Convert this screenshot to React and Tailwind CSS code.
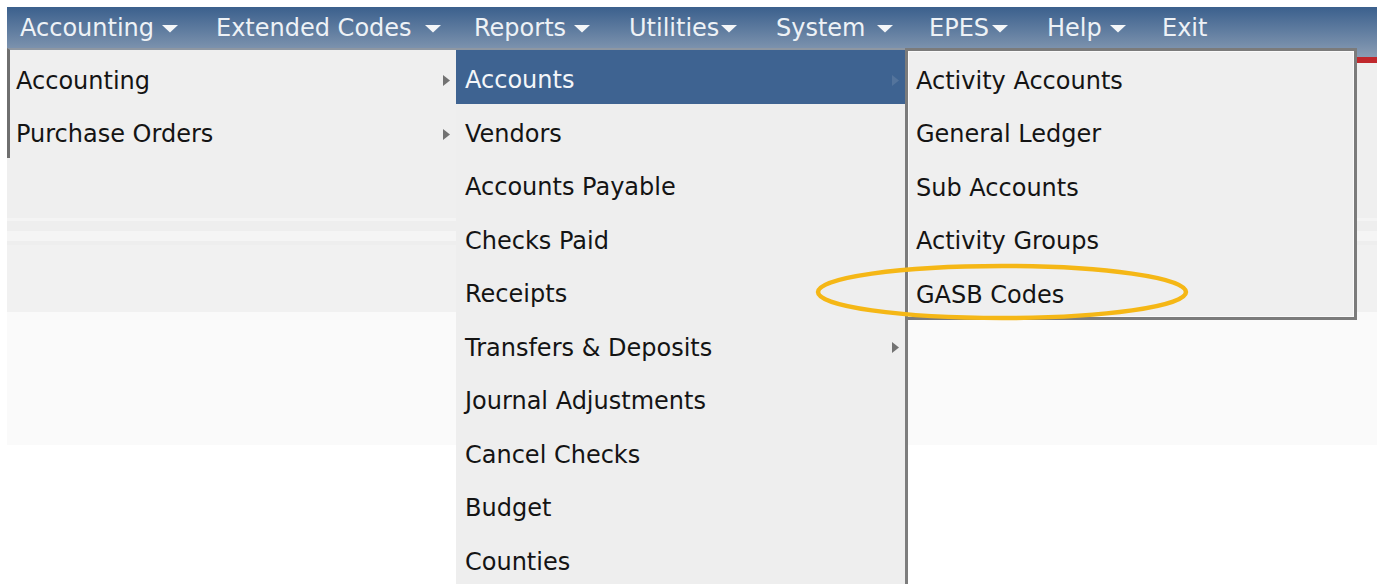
import React from 'react';

const topMenu = [
    { label: 'Accounting', width: 'w-[196px]', gap: 'ml-[8px]', arrow: true },
    { label: 'Extended Codes', width: 'w-[258px]', gap: 'ml-[13px]', arrow: true },
    { label: 'Reports', width: 'w-[155px]', gap: 'ml-[8px]', arrow: true },
    { label: 'Utilities', width: 'w-[147px]', gap: 'ml-[2px]', arrow: true },
    { label: 'System', width: 'w-[153px]', gap: 'ml-[11px]', arrow: true },
    { label: 'EPES', width: 'w-[118px]', gap: 'ml-[3px]', arrow: true },
    { label: 'Help', width: 'w-[115px]', gap: 'ml-[8px]', arrow: true },
    { label: 'Exit', width: 'w-[80px]', gap: '', arrow: false },
];

const reportItems = [
    { label: 'Accounts', sub: true, active: true },
    { label: 'Vendors' },
    { label: 'Accounts Payable' },
    { label: 'Checks Paid' },
    { label: 'Receipts' },
    { label: 'Transfers & Deposits', sub: true },
    { label: 'Journal Adjustments' },
    { label: 'Cancel Checks' },
    { label: 'Budget' },
    { label: 'Counties' },
];

const accountItems = ['Activity Accounts', 'General Ledger', 'Sub Accounts', 'Activity Groups', 'GASB Codes'];

const DownArrow = () => (
    <svg width="16" height="8" viewBox="0 0 16 8" className="mt-[2px]">
        <polygon points="0,0 16,0 8,7.5" fill="#f4f6f8" />
    </svg>
);

const SubArrow = ({ color = '#727272' }) => (
    <svg width="7" height="11" viewBox="0 0 7 11">
        <polygon points="0,0 7,5.5 0,11" fill={color} />
    </svg>
);

const MenuRow = ({ label, sub, active }) => (
    <div
        className={`flex h-[53.5px] items-center pt-[7px] pl-[9px] pr-[6px] ${
            active ? 'bg-[#3e6391] text-[#f4f6f9]' : 'text-[#141414]'
        }`}
    >
        <span className="flex-1 whitespace-nowrap">{label}</span>
        {sub && <SubArrow color={active ? '#54749c' : '#727272'} />}
    </div>
);

export default function App() {
    return (
        <div
            className="relative h-[584px] w-[1377px] overflow-hidden bg-white text-[24px]"
            style={{ fontFamily: '"DejaVu Sans", Verdana, sans-serif' }}
        >
            <div className="ml-[7px] mt-[7px]">
                {/* nav bar */}
                <div className="h-[50px] bg-gradient-to-b from-[#3b608d] to-[#8a9db4]">
                    <nav className="flex h-[41px] items-start pl-[13px] pt-[3px] text-[#eef2f6]">
                        {topMenu.map((item) => (
                            <div key={item.label} className={`flex shrink-0 items-center ${item.width}`}>
                                <span className="whitespace-nowrap">{item.label}</span>
                                {item.arrow && (
                                    <span className={item.gap}>
                                        <DownArrow />
                                    </span>
                                )}
                            </div>
                        ))}
                    </nav>
                </div>
                <div className="h-[6px] bg-[#c0282d]" />

                {/* page body */}
                <div className="h-[155px] bg-[#efefef]" />
                <div className="h-[3px] bg-[#f4f4f4]" />
                <div className="h-[10px] bg-[#eeeeee]" />
                <div className="h-[10px] bg-[#f5f5f5]" />
                <div className="h-[4px] bg-[#eeeeee]" />
                <div className="h-[67px] bg-[#f1f1f1]" />
                <div className="h-[133px] bg-[#fafafa]" />
            </div>

            {/* Accounting dropdown */}
            <div className="absolute left-[7px] top-[48px] h-[110px] w-[449px] border-l-[3px] border-t-2 border-l-[#6f6f6f] border-t-[#8e97a2] bg-[#efefef] text-[#141414]">
                {['Accounting', 'Purchase Orders'].map((label) => (
                    <div key={label} className="flex h-[53.5px] items-center pl-[6px] pr-[6px] pt-[8px]">
                        <span className="flex-1 whitespace-nowrap">{label}</span>
                        <SubArrow />
                    </div>
                ))}
            </div>

            {/* Reports dropdown */}
            <div className="absolute left-[456px] top-[48px] h-[560px] w-[452px] border-r-[3px] border-t-2 border-r-[#7d7d7d] border-t-[#8e97a2] bg-[#eeeeee]">
                {reportItems.map((item) => (
                    <MenuRow key={item.label} {...item} />
                ))}
            </div>

            {/* Accounts sub menu */}
            <div className="absolute left-[905px] top-[48px] h-[272px] w-[452px] border-[3px] border-[#7b7b7b] bg-[#efefef] shadow-[inset_0_0_0_1px_#fafafa]">
                {accountItems.map((label) => (
                    <div key={label} className="flex h-[53.5px] items-center pl-[8px] pt-[6px] text-[#141414]">
                        <span className="whitespace-nowrap">{label}</span>
                    </div>
                ))}
            </div>

            {/* highlight ring */}
            <svg className="pointer-events-none absolute left-[814px] top-[262px]" width="376" height="60" viewBox="0 0 376 60">
                <ellipse cx="188" cy="30" rx="184" ry="26" fill="none" stroke="#f5b716" strokeWidth="4.5" />
            </svg>
        </div>
    );
}
